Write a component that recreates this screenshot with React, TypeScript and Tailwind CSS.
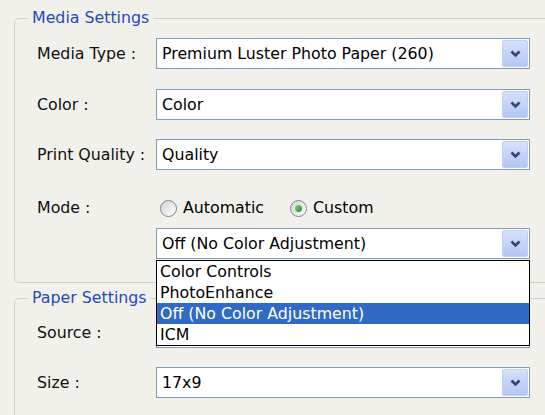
import React from 'react';

const font = { fontFamily: '"DejaVu Sans", Tahoma, sans-serif' };

function Chevron() {
  return (
    <svg width="11" height="8" viewBox="0 0 11 8">
      <path d="M1.5 1.5 L5.5 5.5 L9.5 1.5" fill="none" stroke="#34466f" strokeWidth="2.6" />
    </svg>
  );
}

function Combo({ value }: { value: string }) {
  return (
    <div className="flex h-[31px] w-[374px] items-stretch border border-[#7f9db9] bg-white p-[1px]">
      <div className="flex flex-1 items-center pl-[4px] text-black">{value}</div>
      <div className="flex w-[26px] items-center justify-center rounded-[2px] border border-[#bfcff6] bg-gradient-to-b from-[#d6e0fb] to-[#b3c6f4]">
        <Chevron />
      </div>
    </div>
  );
}

function Radio({ checked, label }: { checked?: boolean; label: string }) {
  return (
    <div className="flex items-center gap-[6px]">
      <div className="flex h-[17px] w-[17px] items-center justify-center rounded-full border border-[#74879a] bg-gradient-to-br from-[#d4d4cc] to-white">
        {checked && <div className="h-[7px] w-[7px] rounded-full bg-gradient-to-br from-[#7ad67a] to-[#1f8f1f]" />}
      </div>
      <span>{label}</span>
    </div>
  );
}

function Row({ label, children, className }: { label: string; children: React.ReactNode; className?: string }) {
  return (
    <div className={`flex items-center ${className ?? ''}`}>
      <div className="w-[119px] text-[#111]">{label}</div>
      {children}
    </div>
  );
}

const items = ['Color Controls', 'PhotoEnhance', 'Off (No Color Adjustment)', 'ICM'];

export default function App() {
  return (
    <div className="relative h-[415px] w-[545px] overflow-hidden bg-[#f1f0ea] text-[15.8px] leading-[20px]" style={font}>
      <fieldset className="ml-[14px] mt-[8px] h-[275px] w-[560px] rounded-[5px] border border-[#d0d0bf] pl-[22px]">
        <legend className="ml-[-9px] px-[4px] text-[#1d4bbf]">Media Settings</legend>
        <Row label="Media Type :" className="mt-[10px]">
          <Combo value="Premium Luster Photo Paper (260)" />
        </Row>
        <Row label="Color :" className="mt-[20px]">
          <Combo value="Color" />
        </Row>
        <Row label="Print Quality :" className="mt-[19px]">
          <Combo value="Quality" />
        </Row>
        <Row label="Mode :" className="mt-[28px] h-[20px]">
          <div className="ml-[4px] flex items-center gap-[26px] text-black">
            <Radio label="Automatic" />
            <Radio checked label="Custom" />
          </div>
        </Row>
        <Row label="" className="mt-[10px]">
          <div className="relative">
            <Combo value="Off (No Color Adjustment)" />
            <div className="absolute left-0 top-[32px] z-10 w-[374px] border border-black bg-white">
              {items.map((it, i) => (
                <div
                  key={it}
                  className={`h-[21px] pl-[3px] leading-[21px] ${i === 2 ? 'bg-[#316ac5] text-white' : 'text-black'}`}
                >
                  {it}
                </div>
              ))}
            </div>
          </div>
        </Row>
      </fieldset>

      <fieldset className="ml-[14px] mt-[5px] h-[200px] w-[560px] rounded-[5px] border border-[#d0d0bf] pl-[22px]">
        <legend className="ml-[-9px] px-[4px] text-[#1d4bbf]">Paper Settings</legend>
        <Row label="Source :" className="mt-[9px]">
          <Combo value="" />
        </Row>
        <Row label="Size :" className="mt-[19px]">
          <Combo value="17x9" />
        </Row>
      </fieldset>
    </div>
  );
}
